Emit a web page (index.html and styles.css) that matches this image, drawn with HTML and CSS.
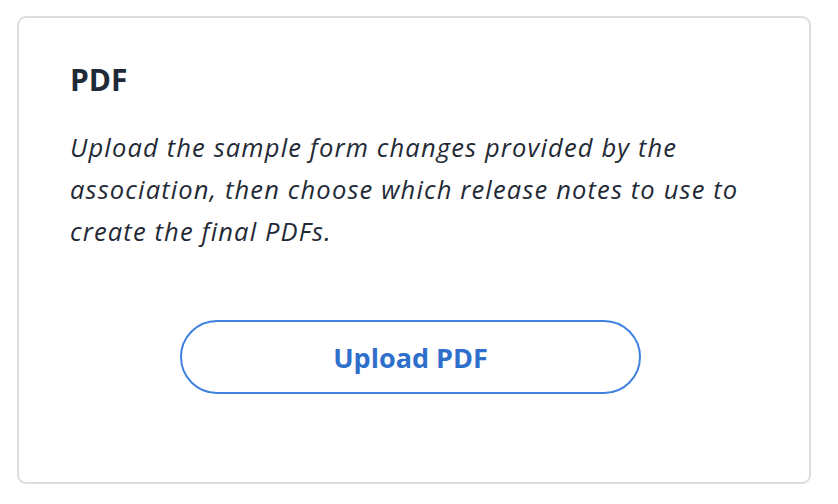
FILE: index.html
```html
<!DOCTYPE html>
<html>
<head>
<meta charset="utf-8">
<link rel="stylesheet" href="styles.css">
</head>
<body>
<div class="card">
  <h2 class="title">PDF</h2>
  <p class="desc">Upload the sample form changes provided by the association, then choose which release notes to use to create the final PDFs.</p>
  <div class="actions">
    <button class="btn">Upload PDF</button>
  </div>
</div>
</body>
</html>
```
FILE: styles.css
```css
html, body {
  margin: 0;
  background: #ffffff;
}
body {
  padding: 16px 27px 20px 17px;
  font-family: "Open Sans", "Noto Sans", sans-serif;
}
.card {
  box-sizing: border-box;
  height: 468px;
  border: 2px solid #dedede;
  border-radius: 9px;
  padding: 42px 50px 0 51px;
}
.title {
  margin: 0;
  font-size: 30px;
  line-height: 40px;
  font-weight: 700;
  color: #1f2a36;
}
.desc {
  margin: 26px 0 0;
  font-size: 25.5px;
  line-height: 42px;
  letter-spacing: 1.15px;
  font-style: italic;
  color: #1f2a36;
}
.actions {
  display: flex;
  justify-content: center;
  margin-top: 68px;
  padding-right: 8px;
}
.btn {
  width: 461px;
  height: 74px;
  border: 2px solid #3f82e0;
  border-radius: 37px;
  background: #fff;
  color: #2f6fcc;
  font-family: "Open Sans", "Noto Sans", sans-serif;
  font-size: 27px;
  font-weight: 700;
}
```
